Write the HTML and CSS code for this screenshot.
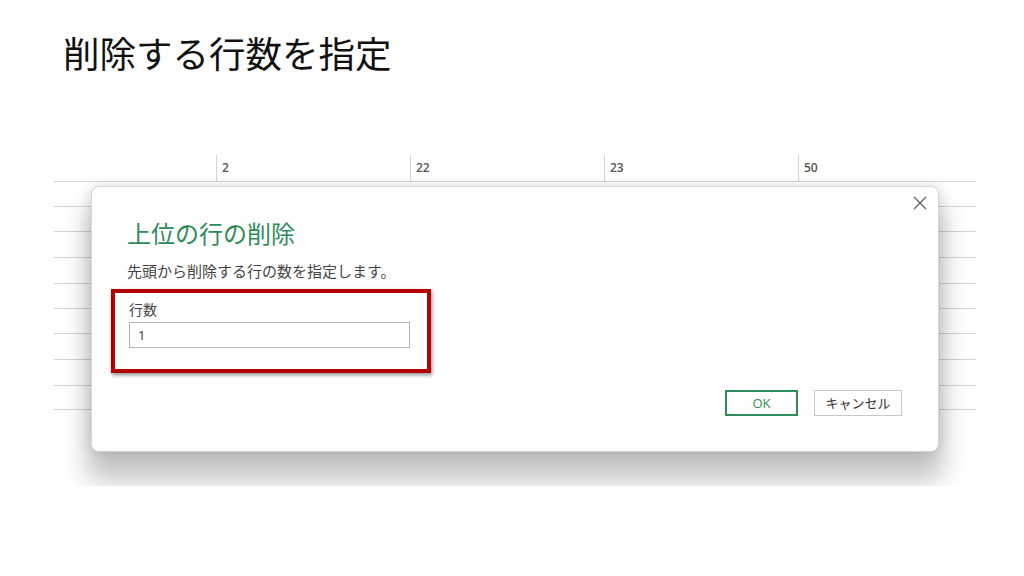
FILE: index.html
```html
<!DOCTYPE html>
<html lang="ja">
<head>
    <meta charset="UTF-8">
    <title>削除する行数を指定</title>
    <link rel="stylesheet" href="styles.css">
</head>
<body>
    <h1 class="pageTitle">削除する行数を指定</h1>

    <!--Excelの画面キャプチャ部分-->
    <div class="sheet">
        <div class="colHead">
            <div class="cell first"></div>
            <div class="cell">2</div>
            <div class="cell">22</div>
            <div class="cell">23</div>
            <div class="cell">50</div>
        </div>
        <div class="row"></div>
        <div class="row"></div>
        <div class="row tall"></div>
        <div class="row tall"></div>
        <div class="row"></div>
        <div class="row"></div>
        <div class="row tall"></div>
        <div class="row tall"></div>
        <div class="row short"></div>

        <!--ダイアログ-->
        <div class="dialog">
            <span class="closeBtn">
                <svg width="14" height="14" viewBox="0 0 14 14"><path d="M1 1L13 13M13 1L1 13" stroke="#666" stroke-width="1.4" fill="none"/></svg>
            </span>
            <h2 class="dlgTitle">上位の行の削除</h2>
            <p class="dlgDesc">先頭から削除する行の数を指定します。</p>
            <div class="field">
                <label class="fieldLabel">行数</label>
                <div class="input">1</div>
            </div>
            <div class="btnRow">
                <div class="btn ok">OK</div>
                <div class="btn">キャンセル</div>
            </div>
        </div>
    </div>
</body>
</html>
```

FILE: styles.css
```css
*{
    padding: 0;
    margin: 0;
    box-sizing: border-box;
}
body{
    width: 1024px;
    height: 576px;
    background: #fff;
    font-family: "Noto Sans CJK JP", "Noto Sans", sans-serif;
    color: #222;
    overflow: hidden;
}
.pageTitle{
    padding: 31px 0 0 63px;
    height: 155px;
    font-size: 36.5px;
    line-height: 44px;
    font-weight: 400;
    color: #111;
}
.sheet{
    position: relative;
    margin-left: 54px;
    width: 922px;
    height: 331px;
    overflow: hidden;
    background: #fff;
}
.sheet .colHead{
    display: flex;
    height: 27px;
    border-bottom: 1px solid #d4d4d4;
}
.sheet .colHead .cell{
    flex-shrink: 0;
    width: 194px;
    height: 26px;
    padding: 6px 0 0 5px;
    border-left: 1px solid #d4d4d4;
    font-family: "Open Sans", "Liberation Sans", sans-serif;
    font-size: 12px;
    line-height: 14px;
    font-weight: 600;
    color: #555;
}
.sheet .colHead .first{
    width: 162px;
    border-left: none;
}
.sheet .row{
    height: 25px;
    border-bottom: 1px solid #d4d4d4;
}
.sheet .row.tall{
    height: 26px;
}
.sheet .row.short{
    height: 24px;
}
.dialog{
    position: absolute;
    left: 37px;
    top: 31px;
    width: 848px;
    height: 266px;
    padding: 30px 36px 0 35px;
    background: #fff;
    border: 1px solid #d6d6d6;
    border-radius: 8px;
    box-shadow: 0 24px 26px 4px rgba(0,0,0,0.24), 4px 0 12px rgba(0,0,0,0.07), -4px 0 12px rgba(0,0,0,0.07);
    display: flex;
    flex-direction: column;
}
.dialog .closeBtn{
    position: absolute;
    top: 9px;
    right: 11px;
    width: 14px;
    height: 14px;
}
.dialog .closeBtn svg{
    display: block;
}
.dlgTitle{
    font-size: 24px;
    line-height: 32px;
    font-weight: 400;
    color: #2e8b5a;
}
.dlgDesc{
    margin-top: 12px;
    font-size: 15px;
    line-height: 20px;
    color: #444;
}
.field{
    margin: 8px 0 0 -16px;
    width: 320px;
    height: 84px;
    padding: 6px 0 0 14px;
    border: 4px solid #b30000;
    box-shadow: 1px 2px 4px rgba(0,0,0,0.45);
}
.fieldLabel{
    display: block;
    font-size: 14px;
    line-height: 20px;
    color: #444;
}
.field .input{
    margin-top: 3px;
    width: 281px;
    height: 26px;
    padding-left: 8px;
    border: 1px solid #b4b4b4;
    font-family: "Open Sans", "Liberation Sans", sans-serif;
    font-size: 13px;
    line-height: 24px;
    color: #333;
}
.btnRow{
    display: flex;
    justify-content: flex-end;
    gap: 16px;
    margin-top: 17px;
}
.btn{
    width: 88px;
    height: 26px;
    border: 1px solid #c8c8c8;
    text-align: center;
    font-size: 13px;
    line-height: 24px;
    color: #333;
}
.btn.ok{
    width: 73px;
    border: 2px solid #2e8b5a;
    line-height: 22px;
    color: #2e8b5a;
    font-family: "Open Sans", "Liberation Sans", sans-serif;
}
```
